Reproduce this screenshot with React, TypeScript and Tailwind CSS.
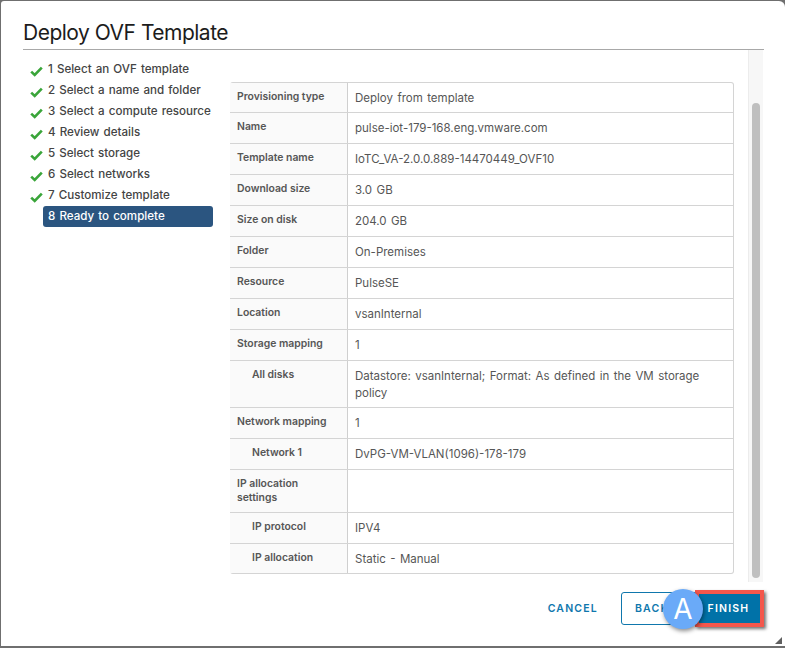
import React from "react";

const steps = ["1 Select an OVF template","2 Select a name and folder","3 Select a compute resource","4 Review details","5 Select storage","6 Select networks","7 Customize template"];
type Row = { l: string; v: string; indent?: boolean; h: string };
const rows: Row[] = [
  { l: "Provisioning type", v: "Deploy from template", h: "h-[30px]" },
  { l: "Name", v: "pulse-iot-179-168.eng.vmware.com", h: "h-[31px]" },
  { l: "Template name", v: "IoTC_VA-2.0.0.889-14470449_OVF10", h: "h-[31px]" },
  { l: "Download size", v: "3.0 GB", h: "h-[31px]" },
  { l: "Size on disk", v: "204.0 GB", h: "h-[31px]" },
  { l: "Folder", v: "On-Premises", h: "h-[31px]" },
  { l: "Resource", v: "PulseSE", h: "h-[31px]" },
  { l: "Location", v: "vsanInternal", h: "h-[31px]" },
  { l: "Storage mapping", v: "1", h: "h-[31px]" },
  { l: "All disks", v: "Datastore: vsanInternal; Format: As defined in the VM storage policy", indent: true, h: "h-[47px]" },
  { l: "Network mapping", v: "1", h: "h-[31px]" },
  { l: "Network 1", v: "DvPG-VM-VLAN(1096)-178-179", indent: true, h: "h-[31px]" },
  { l: "IP allocation settings", v: "", h: "h-[43px]" },
  { l: "IP protocol", v: "IPV4", indent: true, h: "h-[31px]" },
  { l: "IP allocation", v: "Static - Manual", indent: true, h: "h-[29px]" },
];

function Check() {
  return (
    <svg width="13" height="11" viewBox="0 0 13 11" className="shrink-0">
      <path d="M1.2 5.6 L4.7 9 L11.8 1.6" fill="none" stroke="#3aa53a" strokeWidth="2.6" />
    </svg>
  );
}

export default function App() {
  return (
    <div className="w-[785px] h-[648px] bg-[#6f6f6f] pl-px pt-px pb-[2px] overflow-hidden" style={{ fontFamily: '"Inter","Noto Sans",sans-serif' }}>
      <div className="relative w-[784px] h-[645px] bg-white rounded-tl-[3px] rounded-tr-[6px] flex flex-col pl-[22px] pr-[21px]">
        <h1 className="h-[49px] pt-[17px] text-[21px] tracking-[-0.5px] leading-[30px] text-[#1c1c1c] font-normal border-b border-[#a8a8a8] shrink-0">Deploy OVF Template</h1>
        <div className="flex h-[532px] shrink-0">
          <nav className="w-[207px] shrink-0 pt-[9px] pl-[7px] flex flex-col">
            {steps.map((s) => (
              <div key={s} className="h-[21px] flex items-center gap-[5px] text-[11.6px] [word-spacing:1px] font-medium text-[#444]">
                <span className="pt-[4px]"><Check /></span>
                <span>{s}</span>
              </div>
            ))}
            <div className="h-[21px] ml-[13px] w-[170px] rounded-[3px] bg-[#2b5580] text-white text-[11.6px] [word-spacing:1px] font-medium flex items-center pl-[5px]">8 Ready to complete</div>
          </nav>
          <div className="w-[504px] shrink-0 pt-[32px]">
            <div className="border-t border-r border-b border-[#d4d4d4] rounded-[3px]">
              {rows.map((r, i) => (
                <div key={r.l} className={`flex ${r.h} ${i < rows.length - 1 ? "border-b border-[#d4d4d4]" : ""}`}>
                  <div className={`w-[118px] shrink-0 bg-[#fafafa] border-r border-[#cfcfcf] pt-[7px] pr-[8px] text-[10.4px] leading-[14px] font-semibold text-[#565656] ${r.indent ? "pl-[22px]" : "pl-[7px]"}`}>{r.l}</div>
                  <div className="flex-1 pl-[7px] pr-[8px] pt-[7px] text-[11.5px] [word-spacing:1.2px] leading-[17px] text-[#565656]">{r.v}</div>
                </div>
              ))}
            </div>
          </div>
          <div className="ml-[14px] w-[15px] bg-[#f7f7f7] border-l border-[#ececec] pt-[53px] pl-[3px] shrink-0">
            <div className="w-[8px] h-[475px] rounded-[4px] bg-[#bfbfbf]" />
          </div>
        </div>
        <div className="relative flex items-start justify-end h-[63px] pt-[10px] shrink-0">
          <button className="mr-[23px] mt-[9px] text-[10.5px] font-semibold tracking-[1.2px] text-[#0f77ad]">CANCEL</button>
          <button className="w-[80px] h-[33px] border border-[#0f77ad] rounded-[3px] text-[10.5px] font-semibold tracking-[1.2px] text-[#0f77ad] text-left pl-[13px]">BACK</button>
          <button className="relative -ml-[6px] -mt-[2px] w-[69px] h-[37px] border-[4px] border-[#f4574c] bg-[#0072a8] text-white text-[10.5px] font-semibold tracking-[1.2px] pr-[2px] shadow-[2px_2px_3px_rgba(0,0,0,0.55)]">FINISH</button>
          <div className="absolute left-[640px] top-[7px] w-[40px] h-[40px] rounded-full bg-[#6aaaf8] text-white text-[28px] font-normal flex items-center justify-center shadow-[1px_2px_4px_rgba(0,0,0,0.45)]">A</div>
        </div>
        <svg width="9" height="9" viewBox="0 0 9 9" className="absolute right-[2px] bottom-[1px]">
          <path d="M8 1 V8 H1 Z" fill="#5f5f5f" />
        </svg>
      </div>
    </div>
  );
}
